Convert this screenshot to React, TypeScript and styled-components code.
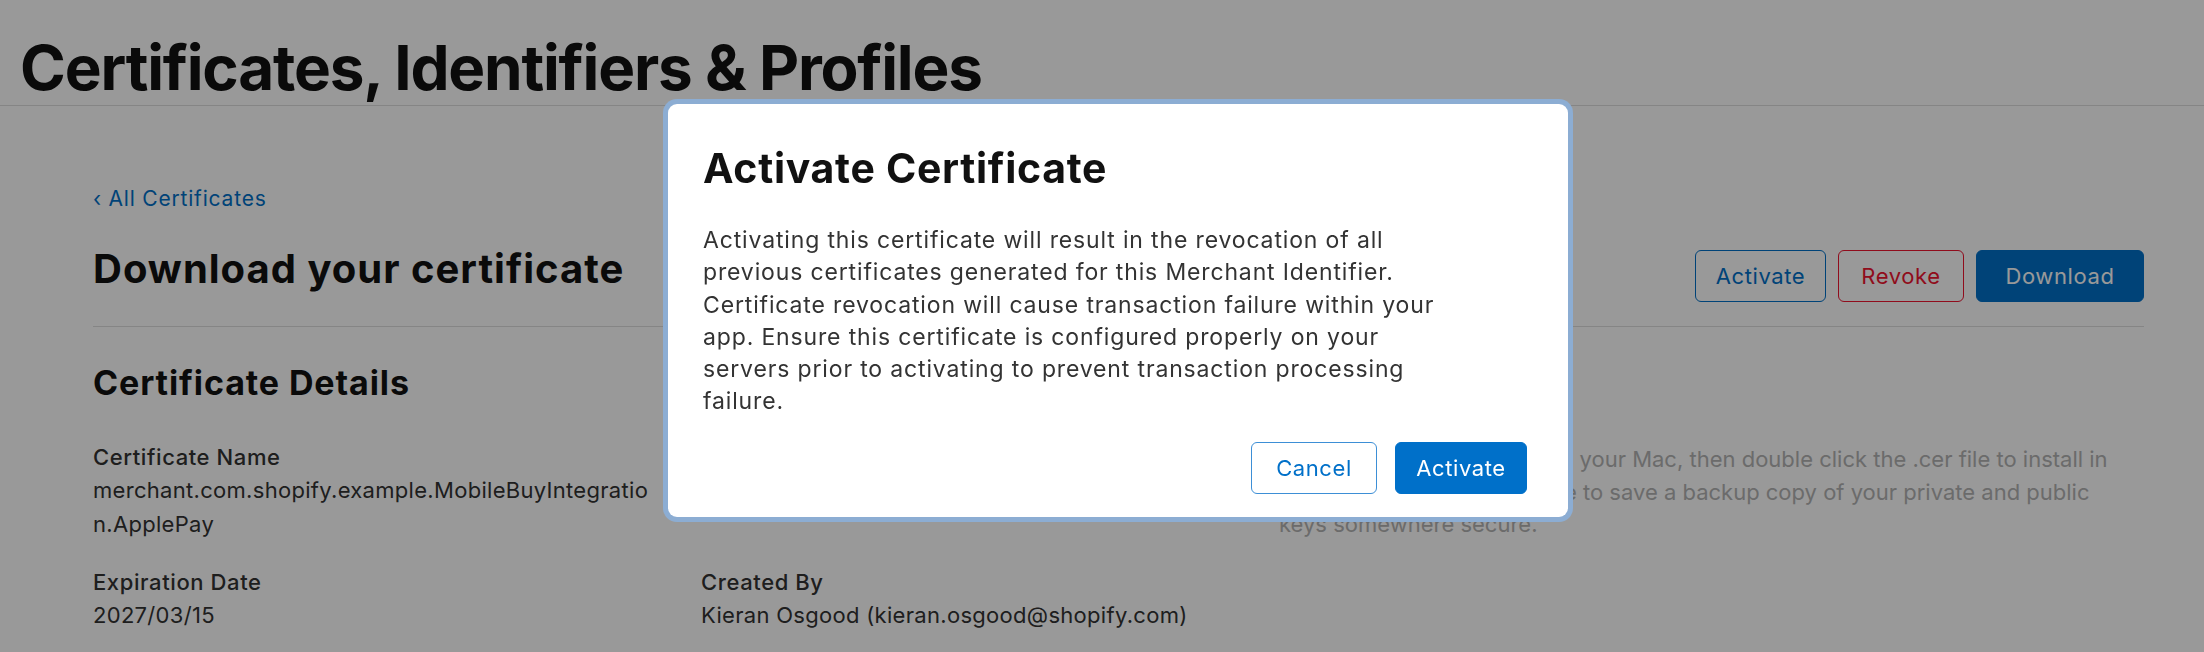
import React from "react";
import styled, { createGlobalStyle } from "styled-components";

const GlobalStyle = createGlobalStyle`
  html, body {
    margin: 0;
    padding: 0;
    background: #ffffff;
  }
  body {
    font-family: Inter, "Noto Sans", "Liberation Sans", sans-serif;
    color: #1d1d1f;
    -webkit-font-smoothing: antialiased;
  }
  * {
    box-sizing: border-box;
  }
`;

const BLUE = "#0070c9";
const RED = "#f01430";

type Variant = "outline" | "danger" | "primary";

const App = () => (
  <>
    <GlobalStyle />
    <Page>
      <Header>
        <PageTitle>Certificates, Identifiers &amp; Profiles</PageTitle>
      </Header>
      <Main>
        <BackLink href="#">
          <Chevron>‹</Chevron> All Certificates
        </BackLink>
        <TitleRow>
          <SectionTitle>Download your certificate</SectionTitle>
          <Actions>
            <Button $variant="outline" $w={131}>
              Activate
            </Button>
            <Button $variant="danger" $w={126}>
              Revoke
            </Button>
            <Button $variant="primary" $w={168}>
              Download
            </Button>
          </Actions>
        </TitleRow>
        <Details>
          <DetailsLeft>
            <DetailsTitle>Certificate Details</DetailsTitle>
            <DetailsGrid>
              <Field>
                <Label>Certificate Name</Label>
                <Value $wrap>
                  merchant.com.shopify.example.MobileBuyIntegration.ApplePay
                </Value>
              </Field>
              <Field />
              <Field>
                <Label>Expiration Date</Label>
                <Value>2027/03/15</Value>
              </Field>
              <Field>
                <Label>Created By</Label>
                <Value>Kieran Osgood (kieran.osgood@shopify.com)</Value>
              </Field>
            </DetailsGrid>
          </DetailsLeft>
          <DetailsRight>
            <Hint>
              Download your certificate to your Mac, then double click the .cer
              file to install in Keychain Access. Make sure to save a backup
              copy of your private and public keys somewhere secure.
            </Hint>
          </DetailsRight>
        </Details>
      </Main>
    </Page>

    <Overlay>
      <Modal role="dialog" aria-modal="true">
        <ModalTitle>Activate Certificate</ModalTitle>
        <ModalText>
          Activating this certificate will result in the revocation of all
          previous certificates generated for this Merchant Identifier.
          Certificate revocation will cause transaction failure within your
          app. Ensure this certificate is configured properly on your servers
          prior to activating to prevent transaction processing failure.
        </ModalText>
        <ModalFooter>
          <Button $variant="outline" $w={126} $light>
            Cancel
          </Button>
          <Button $variant="primary" $w={132}>
            Activate
          </Button>
        </ModalFooter>
      </Modal>
    </Overlay>
  </>
);

export default App;

const Page = styled.div`
  min-height: 652px;
`;

const Header = styled.header`
  padding: 30px 0 0 20px;
  border-bottom: 1px solid #dedede;
`;

const PageTitle = styled.h1`
  margin: 0;
  font-size: 62px;
  line-height: 75px;
  font-weight: 700;
  letter-spacing: -1.2px;
  color: #111;
`;

const Main = styled.main`
  padding: 80px 60px 0 93px;
`;

const BackLink = styled.a`
  display: inline-block;
  font-size: 21px;
  line-height: 26px;
  color: ${BLUE};
  text-decoration: none;
  letter-spacing: 0.8px;
`;

const Chevron = styled.span`
  font-size: 21px;
`;

const TitleRow = styled.div`
  display: flex;
  justify-content: space-between;
  align-items: flex-start;
  margin-top: 33px;
  padding-bottom: 24px;
  border-bottom: 1px solid #dedede;
`;

const SectionTitle = styled.h2`
  margin: 0;
  font-size: 40px;
  line-height: 47px;
  font-weight: 700;
  letter-spacing: 1px;
  color: #111;
`;

const Actions = styled.div`
  display: flex;
  gap: 12px;
  margin-top: 5px;
`;

const Button = styled.button<{ $variant: Variant; $w: number; $light?: boolean }>`
  width: ${({ $w }) => $w}px;
  height: 52px;
  padding: 0;
  border-radius: 6px;
  font-family: inherit;
  font-size: 22px;
  letter-spacing: 0.6px;
  cursor: pointer;
  border: 1px solid
    ${({ $variant }) => ($variant === "danger" ? RED : BLUE)};
  background: ${({ $variant }) => ($variant === "primary" ? BLUE : "#fff")};
  color: ${({ $variant }) =>
    $variant === "primary" ? "#fff" : $variant === "danger" ? RED : BLUE};
  ${({ $light }) => ($light ? "border-color: #3d8fd6;" : "")}
`;

const Details = styled.section`
  display: flex;
  margin-top: 36px;
`;

const DetailsLeft = styled.div`
  width: 1186px;
  flex-shrink: 0;
`;

const DetailsTitle = styled.h3`
  margin: 0;
  font-size: 34px;
  line-height: 40px;
  font-weight: 700;
  letter-spacing: 0.9px;
  color: #111;
`;

const DetailsGrid = styled.div`
  display: grid;
  grid-template-columns: 608px 578px;
  row-gap: 25px;
  margin-top: 38px;
`;

const Field = styled.div`
  display: flex;
  flex-direction: column;
`;

const Label = styled.div`
  font-size: 22px;
  line-height: 32px;
  font-weight: 500;
  color: #333;
  letter-spacing: 0.6px;
`;

const Value = styled.div<{ $wrap?: boolean }>`
  font-size: 22px;
  line-height: 34px;
  color: #333;
  letter-spacing: 0.3px;
  max-width: ${({ $wrap }) => ($wrap ? "565px" : "none")};
  word-break: ${({ $wrap }) => ($wrap ? "break-all" : "normal")};
`;

const DetailsRight = styled.div`
  flex: 1;
  max-width: 858px;
  padding-top: 80px;
`;

const Hint = styled.p`
  margin: 0;
  font-size: 22px;
  line-height: 32.5px;
  color: #b3b3b3;
  letter-spacing: 0px;
`;

const Overlay = styled.div`
  position: fixed;
  inset: 0;
  background: rgba(0, 0, 0, 0.4);
  display: flex;
  justify-content: center;
  align-items: flex-start;
  padding: 104px 0 0 32px;
`;

const Modal = styled.div`
  width: 900px;
  background: #fff;
  border-radius: 9px;
  box-shadow: 0 0 0 5px #8cadd3;
  padding: 39px 35px 23px 35px;
`;

const ModalTitle = styled.h2`
  margin: 0;
  font-size: 41px;
  line-height: 50px;
  font-weight: 700;
  letter-spacing: 0.7px;
  color: #111;
`;

const ModalText = styled.p`
  margin: 31px 0 0;
  max-width: 770px;
  font-size: 23px;
  line-height: 32.3px;
  color: #333;
  letter-spacing: 0.85px;
`;

const ModalFooter = styled.div`
  display: flex;
  justify-content: flex-end;
  gap: 18px;
  margin-top: 24px;
  padding-right: 6px;
`;
